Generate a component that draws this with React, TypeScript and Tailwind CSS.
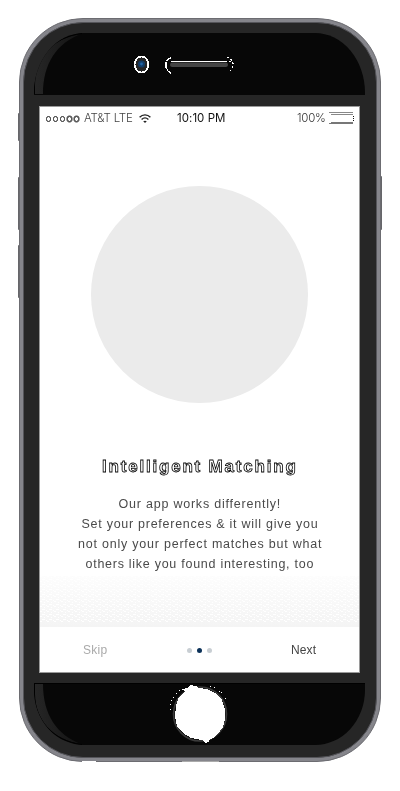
import type { ReactNode } from "react";

const sans = "font-['Liberation_Sans',Arial,sans-serif]";

function Wifi() {
  return (
    <svg width="12" height="9" viewBox="0 0 12 9" fill="none" stroke="#222" strokeWidth="1.4">
      <path d="M.6 3.2C3.6.1 8.4.1 11.4 3.2M2.6 5.5c2-1.9 4.8-1.9 6.8 0" />
      <path d="M6 9 4.2 7.3q1.8-1.2 3.6 0Z" fill="#222" stroke="none" />
    </svg>
  );
}

function Battery() {
  return (
    <svg className="shrink-0" width="26" height="13" viewBox="0 0 26 13" shapeRendering="crispEdges">
      <path d="M0 0h24v1H0zM2 2h22v1H2z" fill="#888" />
      <path d="M2 10h22v1H2zM0 11h24v1H0z" fill="#777" />
      <path d="M24 4h1v1h-1zM24 6h1v1h-1zM24 8h1v1h-1z" fill="#111" />
    </svg>
  );
}

function StatusBar() {
  return (
    <div className={`flex h-[23px] shrink-0 items-center text-[12px] leading-[23px] will-change-transform ${sans}`}>
      <div className="flex w-[38px] items-center gap-[2px] pl-[6px]">
        {[0, 1, 2, 3, 4].map((n) => (
          <i
            key={n}
            className={`h-[6px] w-[5px] shrink-0 rounded-full border-[#222] ${n > 2 ? "border-[1.5px] shadow-[0_0_0_0.5px_#444]" : "border"}`}
          />
        ))}
      </div>
      <span className="ml-[6px] w-[55px] whitespace-nowrap font-['Inter',sans-serif] text-[11.5px] font-light tracking-[-0.22px] text-[#444]">AT&amp;T LTE</span>
      <Wifi />
      <span className="ml-[26px] w-[120px] whitespace-nowrap font-['Inter',sans-serif] text-[11.5px] tracking-[0.05px] text-[#111]">10:10 PM</span>
      <span className="w-[32px] font-['Inter',sans-serif] text-[11.5px] font-light tracking-[-0.25px] text-[#333]">100%</span>
      <Battery />
    </div>
  );
}

function Line({ children, place }: { children: ReactNode; place: string }) {
  return <span className={`block whitespace-nowrap ${place}`}>{children}</span>;
}

function Dither() {
  return (
    <svg className="h-[51px] w-full shrink-0" viewBox="0 0 319 51" preserveAspectRatio="none">
      <defs>
        <linearGradient id="fade" x1="0" y1="0" x2="0" y2="1">
          <stop offset="0" stopColor="#fdfdfd" />
          <stop offset="1" stopColor="#f4f4f4" />
        </linearGradient>
        <pattern id="grain" width="7" height="5" patternUnits="userSpaceOnUse">
          <path d="M0 0h2v1H0zM4 1h1v1H4zM2 3h3v1H2zM6 4h1v1H6z" fill="#fff" />
        </pattern>
      </defs>
      <rect width="319" height="51" fill="url(#fade)" />
      <rect width="319" height="46" fill="url(#grain)" />
    </svg>
  );
}

function Screen() {
  return (
    <main className={`mt-[11px] ml-[15px] flex h-[567px] w-[321px] shrink-0 flex-col border border-[#9a9a9a] bg-white ${sans}`}>
      <StatusBar />
      <div className="mt-[56px] ml-[51px] size-[217px] shrink-0 rounded-full bg-[#ebebeb]" />
      <h1 className="mt-[52px] h-6 pl-[62px] text-[17px] font-bold leading-6 tracking-[1.8px] whitespace-nowrap text-white will-change-transform [-webkit-text-stroke:0.8px_#000]">
        Intelligent Matching
      </h1>
      <p className="mt-[15px] h-20 text-[12.5px] leading-5 text-[#4a4a4a] will-change-transform">
        <Line place="pl-[78.5px] tracking-[0.78px]">Our app works differently!</Line>
        <Line place="pl-[41.5px] tracking-[0.73px]">Set your preferences &amp; it will give you</Line>
        <Line place="pl-[38px] tracking-[0.78px]">not only your perfect matches but what</Line>
        <Line place="pl-[45.5px] tracking-[0.73px]">others like you found interesting, too</Line>
      </p>
      <div className="mt-[2px] flex shrink-0"><Dither /></div>
      <footer className="flex h-[45px] shrink-0 items-center text-[12px] leading-5 will-change-transform">
        <span className="ml-[43px] w-[104px] tracking-[0.3px] text-[#aaa]">Skip</span>
        <div className="flex w-[104px] items-center gap-[5px] pt-px">
          <i className="size-[5px] rounded-full bg-[#c8ced3]" />
          <i className="size-[5px] rounded-full bg-[#0b3158]" />
          <i className="size-[5px] rounded-full bg-[#c8ced3]" />
        </div>
        <span className="tracking-[0.1px] text-[#444]">Next</span>
      </footer>
    </main>
  );
}

function TopPanel() {
  return (
    <div className="mt-[10px] ml-[10px] h-[62px] w-[331px] shrink-0 overflow-hidden rounded-t-[50px_60px] bg-[#070707]">
      <svg width="331" height="62" viewBox="0 0 331 62">
        <defs>
          <linearGradient id="shineTop" x1="0" y1="0" x2="1" y2="0">
            <stop offset="0" stopColor="#262626" />
            <stop offset="1" stopColor="#131313" />
          </linearGradient>
        </defs>
        <path d="M1 61V52C1 25 19 5 47 1C23 10 9 30 9 61Z" fill="url(#shineTop)" />
        <path d="M.5 61V52C.5 24 19 4 48 .5" fill="none" stroke="#000" />
        <ellipse cx="107.5" cy="31.5" rx="6.8" ry="8" fill="#252525" stroke="#fff" strokeWidth="1.6" shapeRendering="crispEdges" />
        <circle cx="107.5" cy="31" r="3.5" fill="#123c68" />
        <circle cx="107.5" cy="31" r="1.4" fill="#2165a5" />
        <rect x="136" y="29.5" width="58" height="4.5" rx="2.2" fill="#444" />
        <path d="M137 28.5h56" stroke="#fff" />
        <path d="M137 25q-6 1-5 8 0 5 5 7" fill="none" stroke="#fff" strokeWidth="1.4" strokeDasharray="6 1" shapeRendering="crispEdges" />
        <path d="M193 24q6 2 6 8 0 5-5 7M195 28l4 2 1 2-3 3" fill="none" stroke="#fff" strokeDasharray="2 2" shapeRendering="crispEdges" />
      </svg>
    </div>
  );
}

function BottomPanel() {
  return (
    <div className="mt-[10px] ml-[10px] h-[62px] w-[331px] shrink-0 overflow-hidden rounded-b-[50px_55px] bg-[#070707]">
      <svg width="331" height="62" viewBox="0 0 331 62">
        <defs>
          <linearGradient id="shineBottom" x1="0" y1="0" x2="1" y2="0">
            <stop offset="0" stopColor="#262626" />
            <stop offset="1" stopColor="#131313" />
          </linearGradient>
        </defs>
        <path d="M1 1V11C1 36 19 57 47 61C23 52 9 32 9 1Z" fill="url(#shineBottom)" />
        <path d="M.5 1V11C.5 37 19 58 48 61.5M0 .5h331" fill="none" stroke="#000" />
        <ellipse cx="166" cy="31" rx="26.5" ry="27" fill="#111" stroke="#3b3b3b" strokeWidth="1.6" />
        <path d="m148 6 5-1 3-3 6 1 3 2 8 1 8 4 7 7 3 9v10l-2 8-5 7-5 4-3 1-1 3-4 1-3-3-11-2-8-5-6-7-2-10 1-10 3-9 6-6-3-1z" fill="#fff" shapeRendering="crispEdges" />
        <path d="M176 3h1m3 1h1m4 4h1m1 1h1m3 6h1M145 7h1m-4 3h1m-4 4h1m-3 3h1m-2 4h1m-1 5h1m39 29h1" stroke="#fff" shapeRendering="crispEdges" />
      </svg>
    </div>
  );
}

export default function App() {
  return (
    <div className="h-[791px] w-[400px] overflow-hidden bg-white pt-[18px] pl-[19px]">
      <div className="relative h-[744px] w-[362px]">
        <i className="absolute top-[95px] -left-px h-[28px] w-[2px] rounded bg-[#66666a]" />
        <i className="absolute top-[159px] -left-px h-[53px] w-[2px] rounded bg-[#66666a]" />
        <i className="absolute top-[227px] -left-px h-[53px] w-[2px] rounded bg-[#66666a]" />
        <i className="absolute top-[158px] -right-px h-[54px] w-[2px] rounded bg-[#66666a]" />
        <div className="relative h-[744px] w-[362px] rounded-[64px] border border-[#6c6c71] bg-[#85858b] p-[3px]">
          <div className="flex h-[736px] w-[354px] flex-col rounded-[60px] border border-[#55555a] bg-[#262626]">
            <TopPanel />
            <Screen />
            <BottomPanel />
          </div>
        </div>
        <i className="absolute bottom-0 left-[63px] h-px w-[14px] bg-white" />
        <i className="absolute bottom-0 left-[163px] h-px w-[37px] bg-[#aaa]" />
      </div>
    </div>
  );
}
